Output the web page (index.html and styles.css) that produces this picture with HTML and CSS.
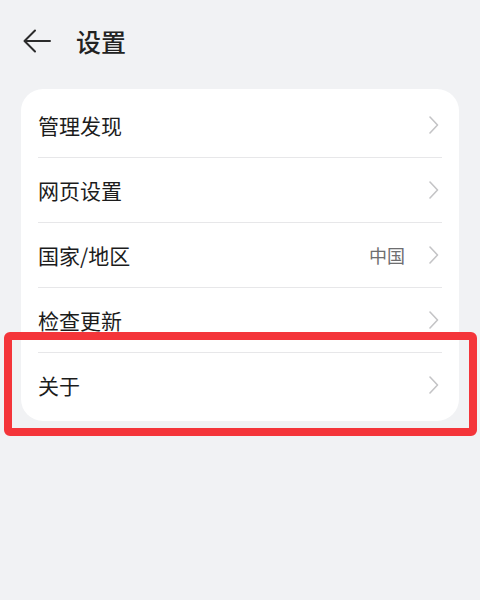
FILE: index.html
```html
<!DOCTYPE html>
<html lang="zh-CN">
<head>
<meta charset="utf-8">
<title>设置</title>
<link rel="stylesheet" href="styles.css">
</head>
<body>
<div class="page">
  <header class="header">
    <svg class="back" width="28" height="24" viewBox="0 0 28 24" aria-hidden="true">
      <path d="M27 12H2M12 1.5L1.5 12L12 22.5" fill="none" stroke="#2b2b2b" stroke-width="2" stroke-linecap="round" stroke-linejoin="round"/>
    </svg>
    <h1 class="title">设置</h1>
  </header>
  <div class="card">
    <div class="row"><span class="label">管理发现</span><span class="chev"><svg width="10" height="18" viewBox="0 0 10 18"><path d="M1 1L8.5 9L1 17" fill="none" stroke="#c4c4c6" stroke-width="1.6" stroke-linecap="round" stroke-linejoin="round"/></svg></span></div>
    <div class="row"><span class="label">网页设置</span><span class="chev"><svg width="10" height="18" viewBox="0 0 10 18"><path d="M1 1L8.5 9L1 17" fill="none" stroke="#c4c4c6" stroke-width="1.6" stroke-linecap="round" stroke-linejoin="round"/></svg></span></div>
    <div class="row"><span class="label">国家/地区</span><span class="value">中国</span><span class="chev"><svg width="10" height="18" viewBox="0 0 10 18"><path d="M1 1L8.5 9L1 17" fill="none" stroke="#c4c4c6" stroke-width="1.6" stroke-linecap="round" stroke-linejoin="round"/></svg></span></div>
    <div class="row"><span class="label">检查更新</span><span class="chev"><svg width="10" height="18" viewBox="0 0 10 18"><path d="M1 1L8.5 9L1 17" fill="none" stroke="#c4c4c6" stroke-width="1.6" stroke-linecap="round" stroke-linejoin="round"/></svg></span></div>
    <div class="row"><span class="label">关于</span><span class="chev"><svg width="10" height="18" viewBox="0 0 10 18"><path d="M1 1L8.5 9L1 17" fill="none" stroke="#c4c4c6" stroke-width="1.6" stroke-linecap="round" stroke-linejoin="round"/></svg></span></div>
  </div>
  <div class="highlight"></div>
</div>
</body>
</html>
```

FILE: styles.css
```css
html, body {
  margin: 0;
  padding: 0;
  background: #f1f2f4;
}
body {
  font-family: "Noto Sans CJK SC", "Noto Sans", sans-serif;
  color: #1c1c1c;
}
.page {
  position: relative;
  width: 480px;
  height: 600px;
}
.header {
  height: 82px;
  display: flex;
  align-items: center;
  padding-left: 23px;
  box-sizing: border-box;
}
.back {
  display: block;
  flex: none;
}
.title {
  margin: 0 0 0 25px;
  font-size: 25px;
  font-weight: 500;
  color: #222;
  line-height: 1;
}
.card {
  margin: 7px 21px 0 21px;
  background: #fff;
  border-radius: 22px;
  padding: 4px 17px;
}
.row {
  height: 64px;
  display: flex;
  align-items: center;
  border-bottom: 1px solid #e7e7e9;
}
.row:last-child {
  border-bottom: none;
}
.label {
  flex: 1;
  font-size: 21px;
  line-height: 1;
  color: #1c1c1c;
}
.value {
  font-size: 18px;
  color: #6e6e70;
  margin-right: 24px;
  line-height: 1;
}
.chev {
  display: flex;
  margin-right: 3px;
}
.chev svg {
  display: block;
}
.highlight {
  position: absolute;
  left: 4px;
  top: 332px;
  width: 473px;
  height: 104px;
  box-sizing: border-box;
  border: 8px solid #f4353a;
  border-radius: 6px;
}
```
